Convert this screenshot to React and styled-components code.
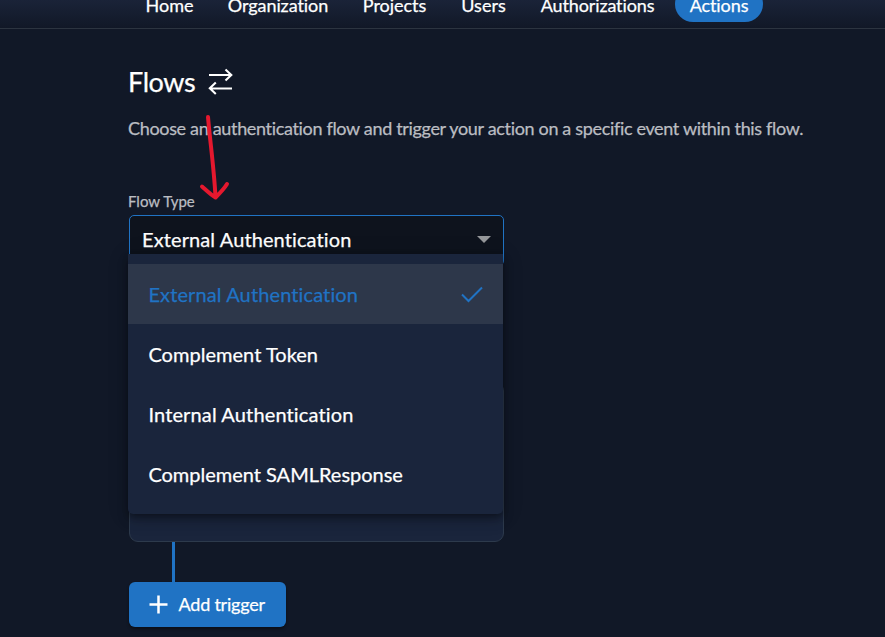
import React from "react";
import styled, { createGlobalStyle } from "styled-components";

const Global = createGlobalStyle`
  * { box-sizing: border-box; }
  body { margin: 0; background: #111827; overflow: hidden; }
`;

const Page = styled.div`
  position: relative;
  width: 885px;
  height: 637px;
  overflow: hidden;
  background: #111827;
  color: #fff;
  font-family: Lato, sans-serif;
  font-size: 18px;
  font-variant-ligatures: none;
  -webkit-text-stroke: 0.25px currentColor;
`;

const NavBar = styled.nav`
  display: flex;
  align-items: flex-start;
  height: 29px;
  padding-left: 128px;
  border-bottom: 1px solid #2c3440;
  background: linear-gradient(#1a2338, #111827);
`;

const NavItem = styled.a`
  flex: none;
  width: ${(p) => p.$width}px;
  height: 36px;
  margin-top: -14px;
  margin-right: ${(p) => p.$gap || 0}px;
  border-radius: 18px;
  background: ${(p) => (p.$active ? "#2073c4" : "transparent")};
  line-height: 39px;
  text-align: center;
  white-space: nowrap;
  letter-spacing: ${(p) => p.$spacing || 0}px;
`;

const Content = styled.main`
  padding: 36px 0 0 129px;
`;

const TitleRow = styled.div`
  display: flex;
  align-items: center;
  height: 34px;
`;

const Title = styled.h1`
  width: 79px;
  margin: 0 0 0 -1px;
  font-size: 27px;
  font-weight: 400;
  line-height: 34px;
  letter-spacing: -0.4px;
`;

const Description = styled.p`
  height: 24px;
  margin: 17px 0 0 -1px;
  color: #bbbdc2;
  line-height: 24px;
  letter-spacing: -0.33px;
  white-space: nowrap;
`;

const Label = styled.label`
  display: block;
  height: 20px;
  margin: 51px 0 0 -1px;
  color: #bbbdc2;
  font-size: 15px;
  line-height: 20px;
`;

const Select = styled.div`
  position: relative;
  display: flex;
  align-items: center;
  justify-content: space-between;
  width: 375px;
  height: 51px;
  margin-top: 4px;
  padding: 0 12px 2px 12px;
  border: 1px solid #2073c4;
  border-radius: 5px;
  background: #0e131d;
  font-size: 20px;
`;

const Value = styled.span`
  margin-top: -2px;
  letter-spacing: 0.11px;
`;

const Arrow = styled.span`
  width: 0;
  height: 0;
  border: 7px solid transparent;
  border-top-color: #96989b;
  border-bottom: 0;
`;

const Menu = styled.ul`
  position: absolute;
  z-index: 1;
  top: 38px;
  left: -2px;
  width: 375px;
  height: 260px;
  margin: 0;
  padding: 10px 0;
  list-style: none;
  border-radius: 0 0 5px 5px;
  background: #1a253c;
  box-shadow: 0 3px 6px -1px #0005, 0 6px 12px #0003, 0 2px 22px #0002;
`;

const Option = styled.li`
  display: flex;
  align-items: center;
  justify-content: space-between;
  height: 60px;
  padding: 0 19px 0 20.4px;
  background: ${(p) => (p.$selected ? "#2d374a" : "transparent")};
  color: ${(p) => (p.$selected ? "#2073c4" : "#fff")};
  line-height: 60px;
  letter-spacing: ${(p) => p.$spacing || 0}px;
`;

const TriggerCard = styled.section`
  width: 375px;
  height: 160px;
  margin-top: 116px;
  border: 1px solid #2d3a4c;
  border-radius: 9px;
  background: #1a253c;
`;

const Connector = styled.div`
  width: 3px;
  height: 40px;
  margin-left: 43px;
  background: #2073c4;
`;

const AddButton = styled.button`
  display: flex;
  align-items: center;
  gap: 10.5px;
  width: 157px;
  height: 45px;
  padding: 0 0 1px 20px;
  border: 0;
  border-radius: 6px;
  background: #2073c4;
  box-shadow: 0 2px 3px #0006;
  color: #fff;
  font: 18px Lato, sans-serif;
  letter-spacing: -0.22px;
  white-space: nowrap;
`;

const Icon = styled.svg`
  flex: none;
  fill: none;
  stroke: currentColor;
`;

const Annotation = styled.svg`
  position: absolute;
  z-index: 2;
  top: 110px;
  left: 195px;
  fill: none;
  stroke: #e5182e;
  stroke-width: 4;
  stroke-linecap: round;
  stroke-linejoin: round;
`;

const navItems = [
  { label: "Home", width: 83 },
  { label: "Organization", width: 134, spacing: -0.08 },
  { label: "Projects", width: 99, spacing: -0.05 },
  { label: "Users", width: 79 },
  { label: "Authorizations", width: 149, gap: 3, spacing: -0.12 },
  { label: "Actions", width: 88, active: true, spacing: -0.1 },
];

const options = [
  { label: "External Authentication", selected: true, spacing: 0.12 },
  { label: "Complement Token", spacing: 0.03 },
  { label: "Internal Authentication", spacing: 0.14 },
  { label: "Complement SAMLResponse", spacing: -0.01 },
];

export default function App() {
  return (
    <Page>
      <Global />
      <NavBar>
        {navItems.map((n) => (
          <NavItem key={n.label} $width={n.width} $gap={n.gap} $active={n.active} $spacing={n.spacing}>
            {n.label}
          </NavItem>
        ))}
      </NavBar>
      <Content>
        <TitleRow>
          <Title>Flows</Title>
          <Icon width="28" height="28" viewBox="0 0 28 28" strokeWidth="2.1">
            <path d="M2 7H24M18.5 1.5L24.3 7L18.5 12.5M25 20.5H3M8.8 14.5L2.8 20.3L8.8 26" />
          </Icon>
        </TitleRow>
        <Description>
          Choose an authentication flow and trigger your action on a specific event within this flow.
        </Description>
        <Label>Flow Type</Label>
        <Select>
          <Value>External Authentication</Value>
          <Arrow />
          <Menu>
            {options.map((o) => (
              <Option key={o.label} $selected={o.selected} $spacing={o.spacing}>
                {o.label}
                {o.selected && (
                  <Icon width="24" height="24" viewBox="0 0 24 24" strokeWidth="2">
                    <path d="M2 12.5L8.5 19L22 5.5" />
                  </Icon>
                )}
              </Option>
            ))}
          </Menu>
        </Select>
        <TriggerCard />
        <Connector />
        <AddButton>
          <Icon width="19" height="19" viewBox="0 0 19 19" strokeWidth="2.5">
            <path d="M0.5 9.5H18.5M9.5 0.5V18.5" />
          </Icon>
          Add trigger
        </AddButton>
      </Content>
      <Annotation width="40" height="95" viewBox="0 0 40 95">
        <path d="M13 7C15 31 19 58 20.5 87M7 76.5C12 81 16 85 20.5 87.5C25 83 29 79 32 74" />
      </Annotation>
    </Page>
  );
}
